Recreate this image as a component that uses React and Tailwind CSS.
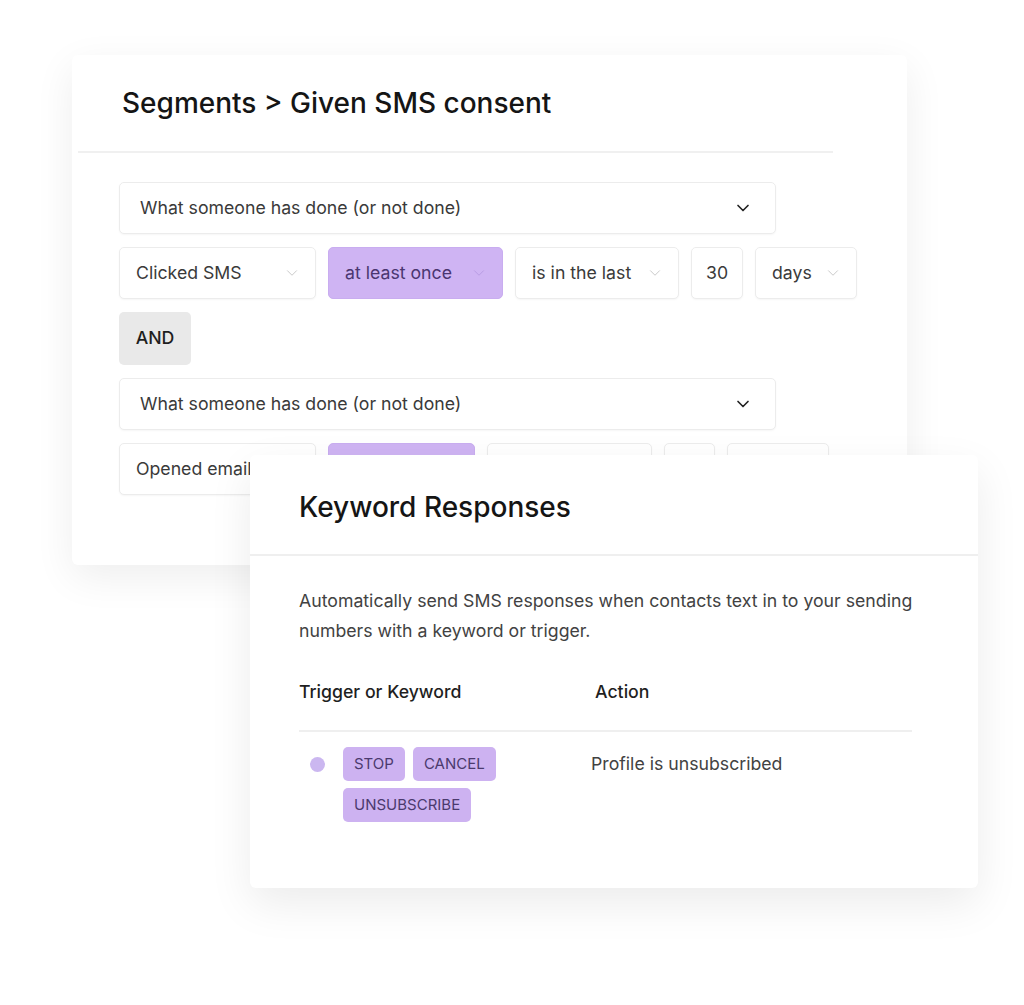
import { ChevronDown } from "lucide-react";

const font = { fontFamily: "Inter, 'Noto Sans', sans-serif" };

function Select({ label, width, purple, big, showChevron = true }) {
  return (
    <div
      className={`flex h-[52px] shrink-0 items-center justify-between rounded-[5px] border text-[17.7px] ${
        big ? "pl-5 pr-[22px]" : "pl-4 pr-[14px]"
      } ${
        purple
          ? "border-[#c9adf0] bg-[#cfb4f3] text-[#4a3670]"
          : "border-[#ececec] bg-white text-[#3a3a3a] shadow-[0_1px_2px_rgba(0,0,0,0.04)]"
      }`}
      style={{ width }}
    >
      <span>{label}</span>
      {showChevron && (
        <ChevronDown
          className={
            big
              ? "h-5 w-5 text-[#222]"
              : purple
              ? "h-[18px] w-[18px] text-[#b89be2]"
              : "h-[18px] w-[18px] text-[#c8c8c8]"
          }
          strokeWidth={big ? 2 : 1.3}
        />
      )}
    </div>
  );
}

function NumberBox({ value, width }) {
  return (
    <div
      className="flex h-[52px] shrink-0 items-center justify-center rounded-[5px] border border-[#ececec] bg-white text-[17.7px] text-[#3a3a3a] shadow-[0_1px_2px_rgba(0,0,0,0.04)]"
      style={{ width }}
    >
      {value}
    </div>
  );
}

function Chip({ children }) {
  return (
    <span className="flex h-[34px] items-center rounded-[5px] bg-[#cdb2f1] px-[11px] text-[15px] uppercase text-[#4b3a6e]">
      {children}
    </span>
  );
}

function SegmentCard() {
  return (
    <div className="ml-[72px] mt-[55px] h-[510px] w-[835px] overflow-hidden rounded-[6px] bg-white shadow-[0_12px_40px_rgba(0,0,0,0.07)]">
      <div className="flex h-[96px] items-center pl-[50px]">
        <h1 className="text-[28px] font-medium text-[#151515]">
          Segments &gt; Given SMS consent
        </h1>
      </div>
      <div className="ml-[6px] h-[2px] w-[755px] bg-[#f0f0f0]" />
      <div className="flex flex-col gap-[13px] pl-[47px] pt-[29px]">
        <Select label="What someone has done (or not done)" width={657} big />
        <div className="flex gap-[12px]">
          <Select label="Clicked SMS" width={197} />
          <Select label="at least once" width={175} purple />
          <Select label="is in the last" width={164} />
          <NumberBox value="30" width={52} />
          <Select label="days" width={102} />
        </div>
        <div className="flex h-[53px] w-[72px] items-center justify-center rounded-[5px] bg-[#e9e9e9] text-[17.7px] font-medium text-[#1f1f1f]">
          AND
        </div>
        <Select label="What someone has done (or not done)" width={657} big />
        <div className="flex gap-[12px]">
          <Select label="Opened email" width={197} showChevron={false} />
          <Select label="" width={147} purple showChevron={false} />
          <Select label="" width={165} showChevron={false} />
          <NumberBox value="" width={51} />
          <Select label="" width={102} showChevron={false} />
        </div>
      </div>
    </div>
  );
}

function KeywordCard() {
  return (
    <div className="relative z-10 -mt-[110px] ml-[250px] h-[433px] w-[728px] rounded-[6px] bg-white shadow-[0_16px_44px_rgba(0,0,0,0.08)]">
      <div className="flex h-[99px] items-center pl-[49px] pt-[4px]">
        <h2 className="text-[28px] font-medium text-[#151515]">
          Keyword Responses
        </h2>
      </div>
      <div className="h-[2px] w-full bg-[#efefef]" />
      <div className="pl-[49px] pt-[30px]">
        <p className="w-[660px] text-[17.7px] leading-[30px] text-[#424242]">
          Automatically send SMS responses when contacts text in to your sending
          numbers with a keyword or trigger.
        </p>
        <div className="mt-[31px] flex h-[30px] items-center text-[17.7px] font-medium text-[#1f1f1f]">
          <div className="w-[296px]">Trigger or Keyword</div>
          <div>Action</div>
        </div>
        <div className="mt-[23px] h-[2px] w-[613px] bg-[#efefef]" />
        <div className="flex pt-[15px]">
          <div className="flex w-[292px] items-start pl-[11px]">
            <span className="mt-[10px] h-[15px] w-[15px] shrink-0 rounded-full bg-[#cbb7f0]" />
            <div className="ml-[18px] flex w-[236px] flex-wrap gap-x-[8px] gap-y-[7px]">
              <Chip>Stop</Chip>
              <Chip>Cancel</Chip>
              <Chip>Unsubscribe</Chip>
            </div>
          </div>
          <div className="flex h-[34px] items-center text-[17.7px] text-[#424242]">
            Profile is unsubscribed
          </div>
        </div>
      </div>
    </div>
  );
}

export default function App() {
  return (
    <div className="min-h-[1005px] w-[1024px] overflow-hidden bg-white" style={font}>
      <SegmentCard />
      <KeywordCard />
    </div>
  );
}
